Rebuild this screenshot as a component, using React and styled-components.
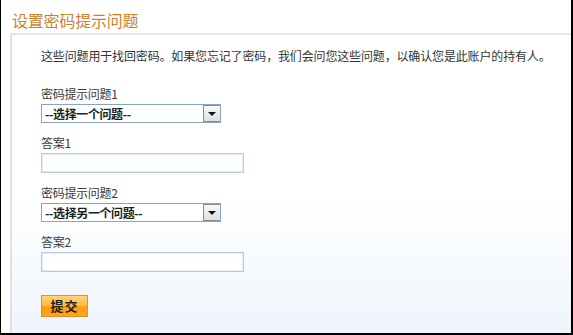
import React from "react";
import styled, { createGlobalStyle } from "styled-components";

const GlobalStyle = createGlobalStyle`
  html, body {
    margin: 0;
    padding: 0;
    background: #fff;
  }
  body {
    font-family: "Noto Sans CJK SC", "Liberation Sans", sans-serif;
  }
`;

const Frame = styled.div`
  width: 573px;
  height: 335px;
  box-sizing: border-box;
  border-left: 1px solid #000;
  border-right: 2px solid #000;
  border-bottom: 2px solid #000;
  display: flex;
  flex-direction: column;
  background: #fff;
`;

const Heading = styled.h2`
  margin: 0;
  height: 33px;
  box-sizing: border-box;
  padding: 9px 0 0 11px;
  font-size: 16px;
  line-height: 22px;
  font-weight: normal;
  color: #d07f2c;
  letter-spacing: -0.2px;
`;

const Panel = styled.div`
  flex: 1;
  margin-left: 9px;
  border-left: 2px solid #e2e2e2;
  border-top: 2px solid #e6e6e6;
  background: linear-gradient(to bottom, #ffffff 0%, #ffffff 55%, #eef5fd 100%);
  padding: 12px 0 0 29px;
  display: flex;
  flex-direction: column;
  align-items: flex-start;
  color: #333;
`;

const Intro = styled.p`
  margin: 0 0 21px;
  font-size: 12px;
  line-height: 18px;
  letter-spacing: -0.15px;
`;

const Field = styled.div`
  display: flex;
  flex-direction: column;
  align-items: flex-start;
  margin-bottom: 12px;
`;

const Label = styled.label`
  font-size: 12px;
  line-height: 16px;
  margin-bottom: 2px;
  color: #3a3a3a;
  letter-spacing: -0.3px;
`;

const SelectBox = styled.div`
  width: 180px;
  height: 19px;
  box-sizing: border-box;
  border: 1px solid #8aa4c0;
  background: #fff;
  display: flex;
  align-items: stretch;
`;

const SelectText = styled.span`
  flex: 1;
  padding-left: 3px;
  font-size: 12px;
  line-height: 17px;
  font-weight: bold;
  color: #222;
  letter-spacing: -0.4px;
`;

const SelectArrow = styled.span`
  width: 17px;
  box-sizing: border-box;
  border: 1px solid #8c8c8c;
  border-right: none;
  background: linear-gradient(#f8f8f8, #e0e0e0);
  display: flex;
  align-items: center;
  justify-content: center;

  &::after {
    content: "";
    border-left: 4px solid transparent;
    border-right: 4px solid transparent;
    border-top: 4px solid #111;
  }
`;

const TextInput = styled.input`
  width: 203px;
  height: 20px;
  box-sizing: border-box;
  margin: 0;
  border: 1px solid #b9cbe0;
  box-shadow: inset 0 0 0 1px #e4edf7;
  background: #fff;
  outline: none;
`;

const SubmitButton = styled.button`
  margin-top: 11px;
  width: 47px;
  height: 22px;
  box-sizing: border-box;
  padding: 0;
  border: 1px solid #d8962a;
  background: linear-gradient(#ffd47a 0%, #ffbc3c 45%, #ff9d12 55%, #ffa51c 100%);
  font-family: "Noto Sans CJK SC", sans-serif;
  font-size: 13px;
  line-height: 20px;
  font-weight: bold;
  color: #222;
  letter-spacing: 1px;
`;

const questionFields = [
  { question: "密码提示问题1", placeholder: "--选择一个问题--", answer: "答案1" },
  { question: "密码提示问题2", placeholder: "--选择另一个问题--", answer: "答案2" },
];

export default function App() {
  return (
    <>
      <GlobalStyle />
      <Frame>
        <Heading>设置密码提示问题</Heading>
        <Panel>
          <Intro>
            这些问题用于找回密码。如果您忘记了密码，我们会问您这些问题，以确认您是此账户的持有人。
          </Intro>
          {questionFields.map((f) => (
            <React.Fragment key={f.question}>
              <Field>
                <Label>{f.question}</Label>
                <SelectBox>
                  <SelectText>{f.placeholder}</SelectText>
                  <SelectArrow />
                </SelectBox>
              </Field>
              <Field>
                <Label>{f.answer}</Label>
                <TextInput type="text" />
              </Field>
            </React.Fragment>
          ))}
          <SubmitButton type="button">提交</SubmitButton>
        </Panel>
      </Frame>
    </>
  );
}
